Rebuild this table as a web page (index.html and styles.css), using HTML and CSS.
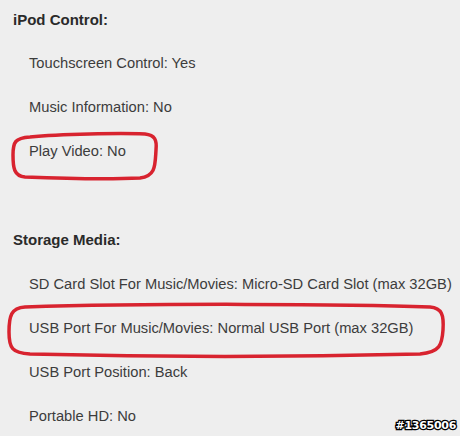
FILE: index.html
```html
<!DOCTYPE html>
<html>
<head>
<meta charset="utf-8">
<link rel="stylesheet" href="styles.css">
</head>
<body>
<div class="page">
  <section class="group first">
    <h3 class="head">iPod Control:</h3>
    <p class="item">Touchscreen Control: Yes</p>
    <p class="item">Music Information: No</p>
    <p class="item">Play Video: No</p>
  </section>
  <section class="group second">
    <h3 class="head">Storage Media:</h3>
    <p class="item">SD Card Slot For Music/Movies: Micro-SD Card Slot (max 32GB)</p>
    <p class="item">USB Port For Music/Movies: Normal USB Port (max 32GB)</p>
    <p class="item">USB Port Position: Back</p>
    <p class="item">Portable HD: No</p>
  </section>
  <svg class="marks" width="460" height="436" viewBox="0 0 460 436">
    <path d="M30,137 C60,134 120,133 145,134 C155,135 157,140 156,150 C155,165 156,176 140,178 C100,180 50,178 25,177 C14,176 13,168 13,155 C13,142 15,138 30,137 Z"/>
    <path d="M25,307 C150,303 350,304 430,307 C442,308 444,315 443,330 C442,345 440,352 420,354 C300,357 150,357 30,354 C12,353 9,348 9,332 C9,316 11,308 25,307 Z"/>
  </svg>
  <div class="watermark">#1365006</div>
</div>
</body>
</html>
```
FILE: styles.css
```css
html, body {
  margin: 0;
  padding: 0;
}
body {
  background: #eeeeee;
  width: 460px;
  height: 436px;
  overflow: hidden;
}
.page {
  position: relative;
  width: 460px;
  height: 436px;
  font-family: "Liberation Sans", Arial, sans-serif;
  color: #3c3c3c;
}
.group {
  display: flex;
  flex-direction: column;
}
.first {
  padding-top: 10px;
}
.first .head {
  margin-bottom: 11px;
}
.second {
  margin-top: 57px;
}
.second .head {
  margin-bottom: 12px;
}
.head {
  margin: 0;
  padding-left: 13px;
  font-size: 15px;
  font-weight: bold;
  line-height: 20px;
  color: #2a2a2a;
}
.item {
  margin: 0;
  padding-left: 29px;
  font-size: 14.7px;
  line-height: 44px;
  white-space: nowrap;
}
.marks {
  position: absolute;
  left: 0;
  top: 0;
  pointer-events: none;
}
.marks path {
  fill: none;
  stroke: #d8232f;
  stroke-width: 3.5;
  stroke-linejoin: round;
}
.watermark {
  position: absolute;
  right: 4px;
  top: 419px;
  font-family: "DejaVu Sans", sans-serif;
  font-size: 11px;
  font-weight: bold;
  color: #ffffff;
  letter-spacing: -0.3px;
  -webkit-text-stroke: 2.5px #000;
  paint-order: stroke fill;
}
```
